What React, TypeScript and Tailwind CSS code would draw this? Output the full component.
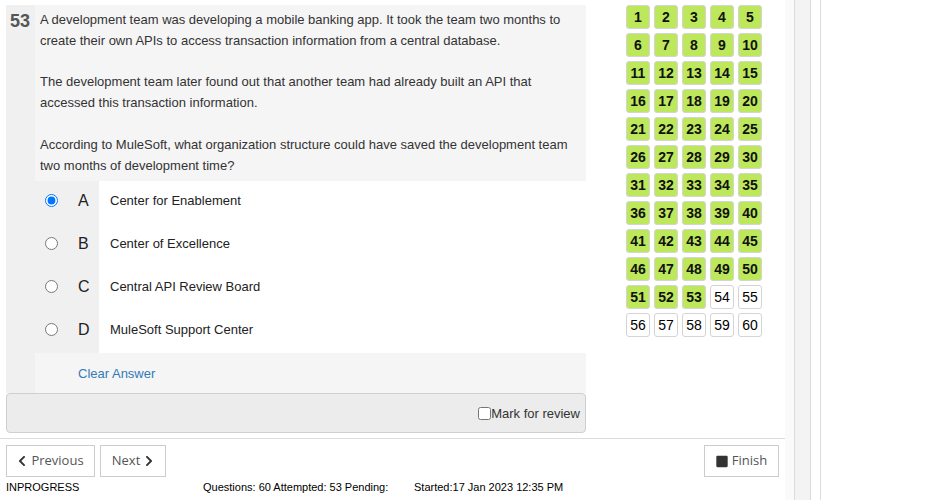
import { FaChevronLeft, FaChevronRight, FaStop } from 'react-icons/fa'

const options = [
  { key: 'A', text: 'Center for Enablement', checked: true },
  { key: 'B', text: 'Center of Excellence', checked: false },
  { key: 'C', text: 'Central API Review Board', checked: false },
  { key: 'D', text: 'MuleSoft Support Center', checked: false },
]

const numbers = Array.from({ length: 60 }, (_, i) => i + 1)

export default function App() {
  return (
    <div className="flex w-[935px] h-[500px] bg-white overflow-hidden font-['Liberation_Sans',Arial,sans-serif] text-[#333]">
      <div className="w-[785px] flex flex-col">
        <div className="flex h-[438px]">
          {/* Question panel */}
          <div className="w-[600px] pl-[6px] pt-[5px]">
            <div className="w-[580px] bg-[#f0f0f0]">
              <div className="flex">
                <div className="w-[29px] pl-[4px] pt-[7px] text-[18px] font-bold leading-none text-[#555]">53</div>
                <div className="flex-1 bg-[#f5f5f5] pl-[5px] pt-[5px] pb-[5px] text-[13px] leading-[20.8px]">
                  A development team was developing a mobile banking app. It took the team two months to
                  <br />
                  create their own APIs to access transaction information from a central database.
                  <br />
                  <br />
                  The development team later found out that another team had already built an API that
                  <br />
                  accessed this transaction information.
                  <br />
                  <br />
                  According to MuleSoft, what organization structure could have saved the development team
                  <br />
                  two months of development time?
                </div>
              </div>

              {/* Options */}
              <div className="flex flex-col">
                {options.map((o) => (
                  <div key={o.key} className="flex h-[43px]">
                    <div className="w-[93px] flex items-center pb-[4px]">
                      <input
                        type="radio"
                        name="answer"
                        defaultChecked={o.checked}
                        className="ml-[39px] w-[13px] h-[13px] m-0"
                      />
                      <span className="ml-[20px] text-[16px] text-[#222]">{o.key}</span>
                    </div>
                    <div className="flex-1 bg-white flex items-center pb-[4px] pl-[11px] text-[13px] text-[#222]">
                      {o.text}
                    </div>
                  </div>
                ))}
              </div>

              <div className="flex h-[40px]">
                <div className="w-[29px]" />
                <div className="flex-1 bg-[#f5f5f5] flex items-center pl-[43px] text-[13px] text-[#337ab7]">
                  Clear Answer
                </div>
              </div>
            </div>

            <div className="w-[580px] h-[40px] bg-[#ececec] border border-[#cfcfcf] rounded-[4px] flex items-center justify-end pr-[5px] text-[13px] text-[#333]">
              <input type="checkbox" className="w-[13px] h-[13px] m-0" />
              <span>Mark for review</span>
            </div>
          </div>

          {/* Question grid */}
          <div className="w-[185px] pl-[26px] pt-[5px]">
            <div className="grid grid-cols-5 gap-[4px] w-[136px]">
              {numbers.map((n) => (
                <div
                  key={n}
                  className={
                    n <= 53
                      ? 'w-[24px] h-[24px] rounded-[3px] border border-[#d4d4d4] bg-[#bde85b] flex items-center justify-center text-[14px] font-bold text-[#111]'
                      : 'w-[24px] h-[24px] rounded-[3px] border border-[#d4d4d4] bg-white flex items-center justify-center text-[14px] text-black'
                  }
                >
                  {n}
                </div>
              ))}
            </div>
          </div>
        </div>

        <div className="h-px bg-[#dcdcdc]" />

        {/* Footer */}
        <div className="flex items-start pt-[6px] pl-[6px] pr-[6px] font-['Open_Sans',sans-serif] text-[13px] text-[#555]">
          <div className="w-[89px] h-[32px] border border-[#ccc] flex items-center justify-center gap-[4px]">
            <FaChevronLeft className="w-[10px] h-[12px] text-[#333]" />
            <span>Previous</span>
          </div>
          <div className="ml-[5px] w-[66px] h-[32px] border border-[#ccc] flex items-center justify-center gap-[4px]">
            <span>Next</span>
            <FaChevronRight className="w-[10px] h-[12px] text-[#333]" />
          </div>
          <div className="ml-auto w-[75px] h-[32px] border border-[#ccc] flex items-center justify-center gap-[4px]">
            <FaStop className="w-[12px] h-[13px] text-[#333]" />
            <span>Finish</span>
          </div>
        </div>
        <div className="flex pl-[6px] pt-[3px] text-[11px] leading-[14px] text-black">
          <span className="w-[197px]">INPROGRESS</span>
          <span className="w-[211px]">Questions: 60 Attempted: 53 Pending:</span>
          <span>Started:17 Jan 2023 12:35 PM</span>
        </div>
      </div>

      {/* Side strips */}
      <div className="w-[9px] bg-[#fafafa]" />
      <div className="w-[17px] bg-[#f3f3f3] border-x border-[#dcdcdc]" />
      <div className="w-[10px] bg-white border-r border-[#dcdcdc]" />
      <div className="flex-1 bg-white" />
    </div>
  )
}
